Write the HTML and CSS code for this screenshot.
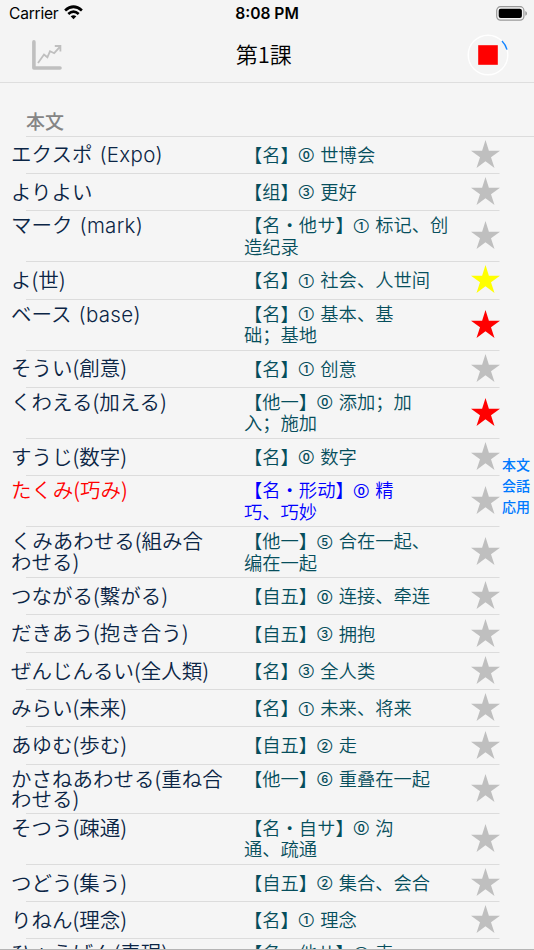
FILE: index.html
```html
<!DOCTYPE html>
<html lang="ja">
<head>
<meta charset="utf-8">
<title>第1課</title>
<link rel="stylesheet" href="styles.css">
</head>
<body>
<svg class="defs" width="0" height="0"><symbol id="star" viewBox="0 0 29 28"><path d="M14.5 0 L17.9 10.7 H29 L20 17.2 L23.5 28 L14.5 21.3 L5.5 28 L9 17.2 L0 10.7 H11.1 Z"/></symbol></svg>
<header>
  <div class="status">
    <div class="carrier"><span>Carrier</span>
      <svg width="19" height="15" viewBox="0 0 19 15"><path d="M9.5 14.2 L6.7 11.3 Q9.5 9 12.3 11.3 Z"/><path class="arc" d="M4.3 8.9 Q9.5 4.4 14.7 8.9 M1.1 5.5 Q9.5 -2 17.9 5.5"/></svg>
    </div>
    <div class="time">8:08 PM</div>
    <svg class="battery" width="32" height="15" viewBox="0 0 32 15"><rect class="shell" x=".7" y=".7" width="27.2" height="13.4" rx="3.8"/><rect x="2.7" y="2.7" width="23.2" height="9.4" rx="2"/><path class="cap" d="M29.3 5 Q31 5.6 31 7.4 Q31 9.2 29.3 9.8 Z"/></svg>
  </div>
  <div class="nav">
    <svg class="chart" width="30" height="30" viewBox="0 0 30 30"><path class="axis" d="M1.9 1.9 V28 H28"/><path class="trend" d="M6 23 L12 14.5 L15.4 17.3 L18 11.3 L22.2 13.2 L28.3 6.3 M22.8 6 H28.4 V11.5"/></svg>
    <h1>第1課</h1>
    <svg class="stop" width="42" height="42" viewBox="0 0 42 42"><circle cx="21" cy="21" r="19.8"/><rect x="11.2" y="11.2" width="19.6" height="19.6"/><path d="M35 7 A19.8 19.8 0 0 1 40 15.6"/></svg>
  </div>
</header>
<main>
  <h2>本文</h2>
  <ul>
    <li><p class="jp">エクスポ<span class="latin">(Expo)</span></p><p class="cn" lang="zh-CN">【名】<b>⓪</b>世博会</p><svg class="star"><use href="#star"/></svg></li>
    <li><p class="jp">よりよい</p><p class="cn" lang="zh-CN">【组】<b>③</b>更好</p><svg class="star"><use href="#star"/></svg></li>
    <li class="tall"><p class="jp">マーク<span class="latin">(mark)</span></p><p class="cn" lang="zh-CN">【名<i>・</i>他サ】<b>①</b>标记、创<br>造纪录</p><svg class="star"><use href="#star"/></svg></li>
    <li><p class="jp">よ(世)</p><p class="cn" lang="zh-CN">【名】<b>①</b>社会、人世间</p><svg class="star yellow"><use href="#star"/></svg></li>
    <li class="tall"><p class="jp">ベース<span class="latin">(base)</span></p><p class="cn" lang="zh-CN">【名】<b>①</b>基本、基<br>础；基地</p><svg class="star red"><use href="#star"/></svg></li>
    <li><p class="jp">そうい(創意)</p><p class="cn" lang="zh-CN">【名】<b>①</b>创意</p><svg class="star"><use href="#star"/></svg></li>
    <li class="tall"><p class="jp">くわえる(加える)</p><p class="cn" lang="zh-CN">【他一】<b>⓪</b>添加；加<br>入；施加</p><svg class="star red"><use href="#star"/></svg></li>
    <li><p class="jp">すうじ(数字)</p><p class="cn" lang="zh-CN">【名】<b>⓪</b>数字</p><svg class="star"><use href="#star"/></svg></li>
    <li class="tall current"><p class="jp">たくみ(巧み)</p><p class="cn" lang="zh-CN">【名<i>・</i>形动】<b>⓪</b>精<br>巧、巧妙</p><svg class="star"><use href="#star"/></svg></li>
    <li class="tall"><p class="jp">くみあわせる(組み合<br>わせる)</p><p class="cn" lang="zh-CN">【他一】<b>⑤</b>合在一起、<br>编在一起</p><svg class="star"><use href="#star"/></svg></li>
    <li><p class="jp">つながる(繋がる)</p><p class="cn" lang="zh-CN">【自五】<b>⓪</b>连接、牵连</p><svg class="star"><use href="#star"/></svg></li>
    <li><p class="jp">だきあう(抱き合う)</p><p class="cn" lang="zh-CN">【自五】<b>③</b>拥抱</p><svg class="star"><use href="#star"/></svg></li>
    <li><p class="jp">ぜんじんるい(全人類)</p><p class="cn" lang="zh-CN">【名】<b>③</b>全人类</p><svg class="star"><use href="#star"/></svg></li>
    <li><p class="jp">みらい(未来)</p><p class="cn" lang="zh-CN">【名】<b>①</b>未来、将来</p><svg class="star"><use href="#star"/></svg></li>
    <li><p class="jp">あゆむ(歩む)</p><p class="cn" lang="zh-CN">【自五】<b>②</b>走</p><svg class="star"><use href="#star"/></svg></li>
    <li class="tall short"><p class="jp">かさねあわせる(重ね合<br>わせる)</p><p class="cn" lang="zh-CN">【他一】<b>⑥</b>重叠在一起</p><svg class="star"><use href="#star"/></svg></li>
    <li class="tall"><p class="jp">そつう(疎通)</p><p class="cn" lang="zh-CN">【名<i>・</i>自サ】<b>⓪</b>沟<br>通、疏通</p><svg class="star"><use href="#star"/></svg></li>
    <li><p class="jp">つどう(集う)</p><p class="cn" lang="zh-CN">【自五】<b>②</b>集合、会合</p><svg class="star"><use href="#star"/></svg></li>
    <li><p class="jp">りねん(理念)</p><p class="cn" lang="zh-CN">【名】<b>①</b>理念</p><svg class="star"><use href="#star"/></svg></li>
    <li class="tall"><p class="jp">ひょうげん(表現)</p><p class="cn" lang="zh-CN">【名<i>・</i>他サ】<b>③</b>表</p><svg class="star"><use href="#star"/></svg></li>
  </ul>
</main>
<nav class="index"><span>本文</span><span>会話</span><span>応用</span></nav>
</body>
</html>
```
FILE: styles.css
```css
* { box-sizing: border-box; margin: 0; padding: 0; }
body {
  width: 534px;
  height: 950px;
  overflow: hidden;
  display: flex;
  flex-direction: column;
  background: #f5f5f5;
  font-family: "Noto Sans CJK JP", sans-serif;
  border-bottom: 1px solid #b5b5b5;
}
.defs { position: absolute; }
header { height: 83px; flex: none; background: #f4f4f4; border-bottom: 1px solid #dedede; }
.status {
  height: 28px;
  display: grid;
  grid-template-columns: 1fr auto 1fr;
  align-items: center;
  padding: 0 6px 0 9px;
  font: 15.6px/28px Inter, sans-serif;
}
.carrier { display: flex; align-items: center; gap: 6px; letter-spacing: -0.25px; }
.carrier svg { margin-top: -3px; }
.arc { fill: none; stroke: #000; stroke-width: 2.7; }
.time { font-weight: 600; margin-left: -3px; }
.battery { justify-self: end; margin-top: -2px; }
.shell { fill: none; stroke: #999; stroke-width: 1.2; }
.cap { fill: #999; }
.nav { height: 54px; display: grid; grid-template-columns: 1fr auto 1fr; align-items: center; padding: 0 25.5px 0 32px; }
.nav svg { margin-top: -1px; }
.axis { fill: none; stroke: #bfbfbf; stroke-width: 3.6; stroke-linecap: round; stroke-linejoin: round; }
.trend { fill: none; stroke: #bfbfbf; stroke-width: 1.8; }
h1 { font-size: 22px; font-weight: 350; line-height: 30px; margin: -5px 13px 0 0; }
.stop { justify-self: end; }
.stop circle { fill: none; stroke: #fff; stroke-width: 1.4; }
.stop rect { fill: #f00; }
.stop path { fill: none; stroke: #1485ff; stroke-width: 1.4; }
main { flex: 1; min-height: 0; overflow: hidden; }
h2 { height: 53.7px; margin-left: 26px; padding-top: 24px; font-size: 19px; line-height: 28px; font-weight: 500; color: #858585; border-bottom: 1px solid #dcdcdc; }
ul { list-style: none; }
li {
  height: 37.3px;
  display: grid;
  grid-template-columns: 233px 227px 29px;
  align-items: center;
  padding-left: 11px;
  background: linear-gradient(#dcdcdc, #dcdcdc) 26px 100% / 473.5px 1px no-repeat;
  white-space: nowrap;
}
.tall { height: 51px; }
.short { height: 49px; }
.jp { font-size: 20.5px; line-height: 20.5px; color: #0b2545; font-weight: 350; margin-top: -3px; }
.cn { font-family: "Noto Sans CJK SC", sans-serif; font-size: 18.3px; line-height: 21.6px; color: #064e5c; font-weight: 350; margin-top: -1.5px; }
.tall p { align-self: start; margin-top: 3px; }
.latin { font-family: Inter, sans-serif; margin-left: 7px; letter-spacing: 0.3px; }
.cn i { display: inline-block; width: 18.3px; font-family: "Noto Sans CJK JP", sans-serif; font-style: normal; line-height: 1; }
.cn b { display: inline-block; width: 21.5px; font-family: Inter, "Noto Sans CJK SC", sans-serif; font-size: 10.8px; line-height: 1; font-weight: 600; vertical-align: 2.6px; }
.star { width: 29px; height: 28px; margin-top: -3px; fill: #bfbfbf; }
.star.yellow { fill: #ff0; }
.star.red { fill: #f00; }
.current .jp { color: #f00; }
.current .cn { color: #00f; }
.index { position: absolute; left: 502px; top: 454px; display: flex; flex-direction: column; font-size: 14px; line-height: 21px; font-weight: 500; color: #007aff; }
```
